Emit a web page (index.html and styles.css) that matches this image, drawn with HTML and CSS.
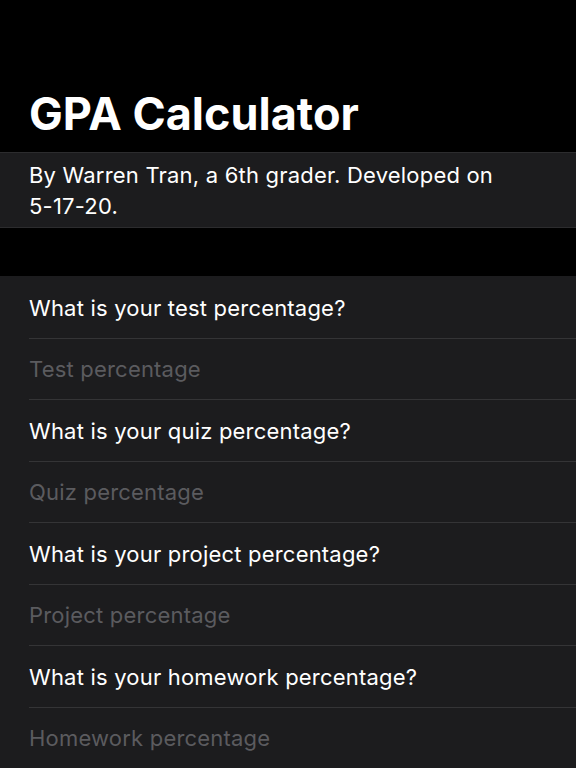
FILE: index.html
```html
<!DOCTYPE html>
<html lang="en">
<head>
<meta charset="utf-8">
<title>GPA Calculator</title>
<link rel="stylesheet" href="styles.css">
</head>
<body>
<div class="screen">
  <header class="nav">
    <h1 class="title">GPA Calculator</h1>
  </header>
  <section class="intro">
    <p class="intro-text">By Warren Tran, a 6th grader. Developed on <span class="nowrap">5-17-20.</span></p>
  </section>
  <div class="spacer"></div>
  <ul class="form">
    <li class="row"><span class="label">What is your test percentage?</span></li>
    <li class="row"><span class="placeholder">Test percentage</span></li>
    <li class="row"><span class="label">What is your quiz percentage?</span></li>
    <li class="row"><span class="placeholder">Quiz percentage</span></li>
    <li class="row"><span class="label">What is your project percentage?</span></li>
    <li class="row"><span class="placeholder">Project percentage</span></li>
    <li class="row"><span class="label">What is your homework percentage?</span></li>
    <li class="row"><span class="placeholder">Homework percentage</span></li>
  </ul>
</div>
</body>
</html>
```
FILE: styles.css
```css
html, body {
  margin: 0;
  padding: 0;
  background: #000;
  height: 100%;
  overflow: hidden;
}
body {
  font-family: Inter, "Noto Sans", "Liberation Sans", sans-serif;
  color: #fff;
}
.screen {
  display: flex;
  flex-direction: column;
  min-height: 768px;
}
.nav {
  height: 152px;
  display: flex;
  align-items: flex-end;
  padding: 0 29px;
  box-sizing: border-box;
}
.title {
  margin: 0 0 11px;
  font-size: 45px;
  font-weight: 700;
  letter-spacing: 0;
  line-height: 54px;
}
.intro {
  background: #1c1c1e;
  border-top: 1px solid #2c2c2e;
  border-bottom: 1px solid #2c2c2e;
  height: 76px;
  box-sizing: border-box;
  padding: 7px 29px 0;
}
.intro-text {
  margin: 0;
  font-size: 22px;
  letter-spacing: 0.2px;
  line-height: 31px;
  color: #fff;
}
.nowrap {
  white-space: nowrap;
}
.spacer {
  height: 48px;
}
.form {
  list-style: none;
  margin: 0;
  padding: 1px 0 0 29px;
  background: #1c1c1e;
  flex: 1;
}
.row {
  height: 61.5px;
  box-sizing: border-box;
  border-bottom: 1px solid #343436;
  display: flex;
  align-items: center;
  font-size: 22px;
  letter-spacing: 0.2px;
  padding-top: 1px;
}
.label {
  color: #fff;
}
.placeholder {
  color: #5b5b5f;
}
```
